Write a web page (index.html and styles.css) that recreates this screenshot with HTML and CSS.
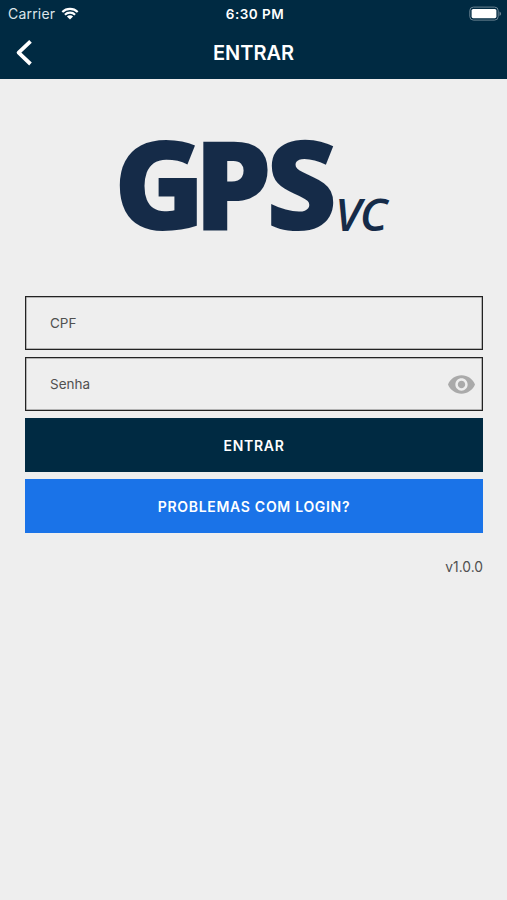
FILE: index.html
```html
<!DOCTYPE html>
<html lang="pt-BR">
<head>
    <meta charset="UTF-8">
    <meta name="viewport" content="width=device-width, initial-scale=1.0">
    <title>GPS VC - Entrar</title>
    <link rel="stylesheet" href="styles.css">
</head>
<body>

    <header>
        <div class="status-bar">
            <div class="carrier">
                <span class="carrier-name">Carrier</span>
                <svg class="wifi" viewBox="0 0 18 13" width="18" height="13">
                    <path d="M1.3 5A11 11 0 0 1 16.7 5M3.9 7.7A7.3 7.3 0 0 1 14.1 7.7" fill="none" stroke="#fff" stroke-width="2.1"/>
                    <path d="M9 12.6L5.9 9.5A4.4 4.4 0 0 1 12.1 9.5Z" fill="#fff"/>
                </svg>
            </div>
            <span class="clock">6:30 PM</span>
            <svg class="battery" viewBox="0 0 33 14" width="33" height="14">
                <rect x="0.8" y="0.1" width="28.4" height="13" rx="3.6" fill="none" stroke="#6b8393" stroke-width="1"/>
                <rect x="2.6" y="2" width="24.8" height="9.2" rx="1.6" fill="#fff"/>
                <path d="M30.5 4.5v4.4q1.6-.7 1.6-2.2t-1.6-2.2z" fill="#6b8393"/>
            </svg>
        </div>
        <div class="nav-bar">
            <button class="back-btn" aria-label="Voltar">
                <svg viewBox="0 0 18 28" width="18" height="28">
                    <path d="M15.5 2.4L3.6 13.7L15.5 25" fill="none" stroke="#fff" stroke-width="3.8" stroke-linejoin="round"/>
                </svg>
            </button>
            <h1>ENTRAR</h1>
        </div>
    </header>

    <main>
        <svg class="logo" viewBox="0 0 280 110" width="280" height="110">
            <text class="logo-main" x="-5.5" y="101" dx="0 -2.5 2.5">GPS</text>
            <text class="logo-sub" x="216" y="101.5">VC</text>
        </svg>

        <form class="login-form">
            <input type="text" class="field" placeholder="CPF">
            <div class="field-group">
                <input type="password" class="field" placeholder="Senha">
                <svg class="eye" viewBox="1 4.5 22 15" width="27" height="19">
                    <path d="M12 4.5C7 4.5 2.73 7.61 1 12c1.73 4.39 6 7.5 11 7.5s9.27-3.11 11-7.5c-1.73-4.39-6-7.5-11-7.5zM12 17c-2.76 0-5-2.24-5-5s2.24-5 5-5 5 2.24 5 5-2.24 5-5 5zm0-8c-1.66 0-3 1.34-3 3s1.34 3 3 3 3-1.34 3-3-1.34-3-3-3z" fill="#aaa"/>
                </svg>
            </div>
            <button type="button" class="btn login-btn">ENTRAR</button>
            <button type="button" class="btn help-btn">PROBLEMAS COM LOGIN?</button>
        </form>

        <p class="version">v1.0.0</p>
    </main>

</body>
</html>
```
FILE: styles.css
```css
* {
    box-sizing: border-box;
}
body {
    font-family: Inter, "Liberation Sans", sans-serif;
    margin: 0;
    min-height: 100vh;
    background-color: #eeeeee;
}
header {
    height: 79px;
    background-color: #002a42;
    color: #fff;
}
.status-bar {
    display: grid;
    grid-template-columns: 1fr auto 1fr;
    align-items: center;
    height: 27px;
    padding: 0 5px 0 8px;
}
.carrier {
    display: flex;
    align-items: center;
    gap: 6px;
}
.carrier-name {
    font-size: 14px;
    color: #dce5ea;
    letter-spacing: 0.2px;
}
.clock {
    font-size: 13.5px;
    font-weight: 600;
    letter-spacing: 0.5px;
}
.battery {
    justify-self: end;
    overflow: visible;
}
.nav-bar {
    display: grid;
    grid-template-columns: 60px 1fr 60px;
    align-items: center;
    height: 51px;
}
.back-btn {
    display: flex;
    padding: 0 0 0 15px;
    border: none;
    background: none;
}
h1 {
    margin: 0;
    text-align: center;
    font-size: 20px;
    font-weight: 600;
}
main {
    padding: 50px 24px 0 25px;
}
.logo {
    display: block;
    margin: 0 auto 57px 94px;
    overflow: visible;
    fill: #152b48;
}
.logo-main {
    font-family: "Open Sans", sans-serif;
    font-size: 124px;
    font-weight: 800;
    letter-spacing: -9px;
}
.logo-sub {
    font-family: "Open Sans", sans-serif;
    font-size: 46px;
    font-style: italic;
    font-weight: 600;
    letter-spacing: -1.5px;
}
.login-form {
    display: flex;
    flex-direction: column;
    gap: 7px;
}
.field {
    display: block;
    width: 100%;
    height: 54px;
    padding: 0 24px;
    border: 1px solid #222;
    border-radius: 0;
    background: transparent;
    box-shadow: inset 0 0 0 0.5px #777;
    font-family: inherit;
    font-size: 13.5px;
    outline: none;
}
.field::placeholder {
    color: #505050;
    opacity: 1;
}
.field-group {
    position: relative;
}
.eye {
    position: absolute;
    right: 8px;
    top: 18px;
}
.btn {
    height: 54px;
    border: none;
    color: #fff;
    font-family: inherit;
    font-size: 14px;
    font-weight: 600;
    letter-spacing: 0.7px;
}
.login-btn {
    background-color: #002a42;
}
.help-btn {
    background-color: #1a73e8;
}
.version {
    margin: 25px 0 0;
    text-align: right;
    font-size: 13.8px;
    line-height: 18px;
    color: #505050;
}
```
